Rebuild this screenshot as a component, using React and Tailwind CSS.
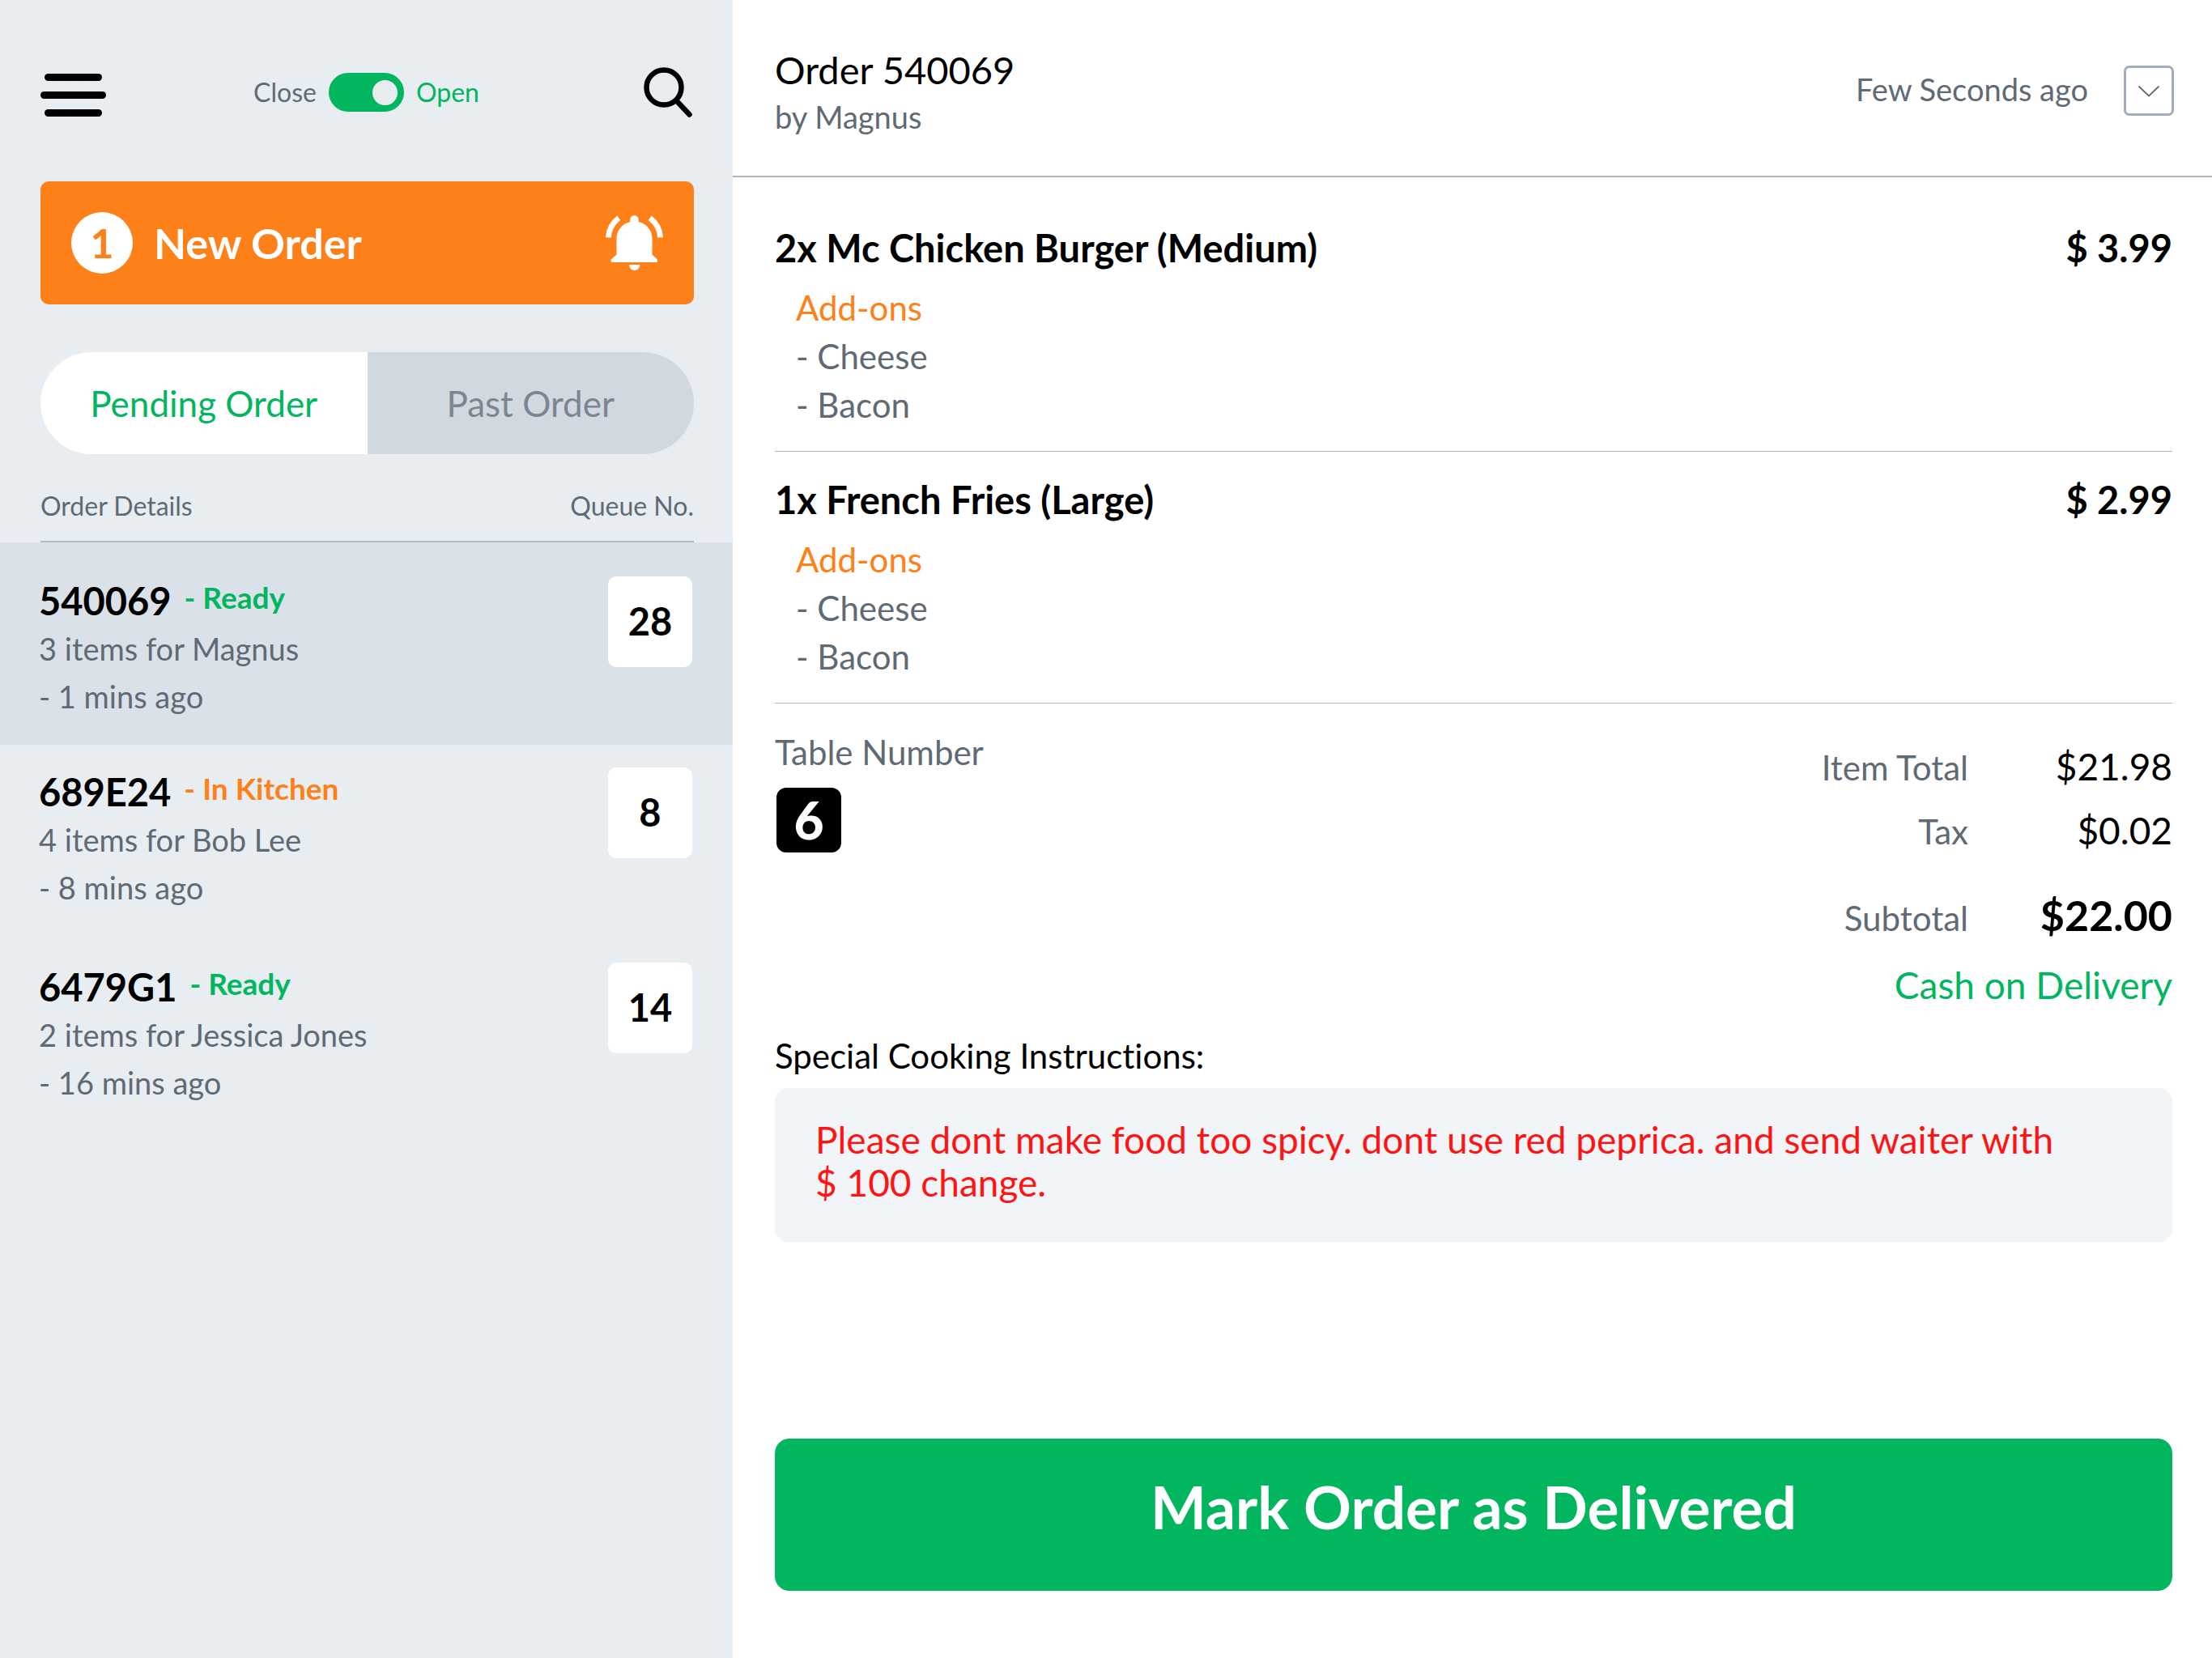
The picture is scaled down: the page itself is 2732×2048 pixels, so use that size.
const queue = [
  { id: "540069", status: "Ready", items: "3 items for Magnus", ago: "- 1 mins ago", no: 28, selected: true },
  { id: "689E24", status: "In Kitchen", items: "4 items for Bob Lee", ago: "- 8 mins ago", no: 8 },
  { id: "6479G1", status: "Ready", items: "2 items for Jessica Jones", ago: "- 16 mins ago", no: 14 },
];

const lines = [
  { name: "2x Mc Chicken Burger (Medium)", price: "$ 3.99", addons: ["Cheese", "Bacon"] },
  { name: "1x French Fries (Large)", price: "$ 2.99", addons: ["Cheese", "Bacon"] },
];

function MenuIcon() {
  return (
    <svg className="h-[62px] w-[81px]" viewBox="0 0 81 62" fill="black" aria-hidden="true">
      <rect x="5" y="8" width="71" height="9" rx="4.5" />
      <rect x="0" y="30" width="81" height="9" rx="4.5" />
      <rect x="5" y="52" width="71" height="9" rx="4.5" />
    </svg>
  );
}

function SearchIcon() {
  return (
    <svg className="h-[62px] w-[60px]" viewBox="0 0 60 62" fill="none" stroke="black" strokeLinecap="round" aria-hidden="true">
      <circle cx="25" cy="25" r="21.5" strokeWidth="6.5" />
      <path d="M41 42 56.5 58.5" strokeWidth="6.5" />
    </svg>
  );
}

function BellIcon() {
  return (
    <svg className="h-[68px] w-[71px]" viewBox="0 0 71 68" aria-hidden="true">
      <path
        fill="white"
        d="M30.3 8V5.2a5.2 5.2 0 0 1 10.4 0V8C50.500 10.200 57.500 18.500 57.500 29V48.500L64 54.500V58H6.700V54.500L13.500 48.500V29C13.500 18.500 20.500 10.200 30.300 8Z"
      />
      <path fill="white" d="M29 61H42.300A6.650 6.900 0 0 1 29 61Z" />
      <g fill="none" stroke="white" strokeWidth="6.8">
        <path d="M3.400 27.300C3.800 17.500 8.500 9.300 16.300 3.200" />
        <path d="M67.600 27.300C67.200 17.500 62.500 9.300 54.700 3.200" />
      </g>
    </svg>
  );
}

function QueueRow({ order }) {
  const tone = order.status === "Ready" ? "text-[#02b55f]" : "text-[#fd8019]";
  const box = order.selected ? "bg-[#dbe1e9] pt-[42px] pb-[30px]" : "pt-7 pb-[35px]";
  return (
    <li>
      <button type="button" className={`flex w-full items-start justify-between pr-[50px] pl-12 text-left ${box}`}>
        <span className="flex flex-col">
          <span className="flex items-center gap-4 leading-[60px] font-bold">
            <span className="text-[47px]">{order.id}</span>
            <span className={`pb-2 text-[37px] leading-[50px] ${tone}`}>- {order.status}</span>
          </span>
          <span className="text-[38px] leading-[58px] text-[#606a75]">{order.items}</span>
          <span className="text-[38px] leading-[60px] text-[#606a75]">{order.ago}</span>
        </span>
        <span className="flex h-[112px] w-[104px] items-center justify-center rounded-[10px] bg-white pb-0.5 text-[47px] font-bold">
          {order.no}
        </span>
      </button>
    </li>
  );
}

function Sidebar() {
  return (
    <aside className="bg-[#e8edf1]">
      <div className="pr-12 pl-[50px]">
        <div className="grid grid-cols-[1fr_auto_1fr] items-center pt-[83px] pr-0.5">
          <button type="button" aria-label="Menu" className="justify-self-start">
            <MenuIcon />
          </button>
          <label className="flex items-center gap-[15px] text-[32px] leading-[48px]">
            <span className="text-[#606a75]">Close</span>
            <input
              type="checkbox"
              role="switch"
              defaultChecked
              aria-label="Restaurant open"
              className="flex h-12 w-[93px] appearance-none items-center rounded-full bg-gray-400 px-2 before:size-[31px] before:rounded-full before:bg-[#e8edf1] checked:justify-end checked:bg-[#02b55f]"
            />
            <span className="text-[#02b55f]">Open</span>
          </label>
          <button type="button" aria-label="Search" className="justify-self-end">
            <SearchIcon />
          </button>
        </div>

        <button type="button" className="mt-[79px] flex h-[152px] w-full items-center rounded-[10px] bg-[#fd8019] pr-[38px] pl-[38px] text-white">
          <span className="flex size-[76px] items-center justify-center rounded-full bg-white text-[50px] font-bold text-[#fd8019]">1</span>
          <span className="ml-[26px] text-[52px] font-bold">New Order</span>
          <span className="ml-auto">
            <BellIcon />
          </span>
        </button>

        <div role="tablist" className="mt-[59px] grid h-[126px] grid-cols-2 overflow-hidden rounded-full text-[44px]">
          <button type="button" role="tab" aria-selected="true" className="bg-white text-[#02b55f]">
            Pending Order
          </button>
          <button type="button" role="tab" aria-selected="false" className="bg-[#d2d8e0] text-[#7b8691]">
            Past Order
          </button>
        </div>

        <div className="mt-10 flex justify-between border-b-2 border-[#b0bac6] pb-[19px] text-[32px] leading-[48px] text-[#606a75]">
          <span>Order Details</span>
          <span>Queue No.</span>
        </div>
      </div>
      <ul>
        {queue.map((order) => (
          <QueueRow key={order.id} order={order} />
        ))}
      </ul>
    </aside>
  );
}

function OrderLine({ line }) {
  return (
    <li className="border-b border-[#a9b6c2] pt-[27px] pb-[27px]">
      <div className="mb-3 flex justify-between text-[47px] leading-[64px] font-bold">
        <h2>{line.name}</h2>
        <span>{line.price}</span>
      </div>
      <div className="pl-[26px] text-[42px] leading-[60px] text-[#606a75]">
        <h3 className="text-[#fd8019]">Add-ons</h3>
        <ul>
          {line.addons.map((name) => (
            <li key={name}>- {name}</li>
          ))}
        </ul>
      </div>
    </li>
  );
}

function TotalRow({ label, value, strong }) {
  return (
    <div className={strong ? "flex items-baseline justify-end pt-[25px]" : "flex items-baseline justify-end"}>
      <dt className="text-[42px] text-[#606a75]">{label}</dt>
      <dd className={strong ? "w-[252px] text-right text-[52px] font-bold" : "w-[252px] text-right text-[46px]"}>{value}</dd>
    </div>
  );
}

export default function App() {
  return (
    <div className="grid min-h-screen grid-cols-[905fr_1827fr] bg-white font-['Lato',sans-serif] text-black [font-variant-ligatures:none]">
      <Sidebar />
      <main className="flex flex-col">
        <header className="flex items-center justify-between border-b-2 border-[#adb8c4] pt-14 pr-[47px] pb-[45px] pl-[52px]">
          <div>
            <h1 className="text-[47px] leading-[60px]">Order 540069</h1>
            <p className="text-[38px] leading-[56px] text-[#606a75]">by Magnus</p>
          </div>
          <div className="flex items-center gap-11 pb-1">
            <span className="pb-1 text-[38px] leading-[56px] text-[#606a75]">Few Seconds ago</span>
            <button
              type="button"
              aria-label="Show order options"
              className="flex size-[62px] items-center justify-center rounded-[7px] border-3 border-[#9fadbc]"
            >
              <svg className="h-[15px] w-7" viewBox="0 0 28 15" fill="none" stroke="#606a75" strokeWidth="1.8" aria-hidden="true">
                <path d="M1.500 1.500 14 13.500 26.500 1.500" />
              </svg>
            </button>
          </div>
        </header>

        <div className="flex grow flex-col pt-7 pr-[49px] pb-[83px] pl-[52px]">
          <ul>
            {lines.map((line) => (
              <OrderLine key={line.name} line={line} />
            ))}
          </ul>

          <section className="flex items-start justify-between">
            <div className="pt-[30px]">
              <h2 className="text-[42px] leading-[60px] text-[#606a75]">Table Number</h2>
              <div className="mt-[14px] ml-0.5 flex size-20 items-center justify-center rounded-xl bg-black text-[64px] font-black text-white">6</div>
            </div>
            <div className="pt-[39px]">
              <dl className="leading-[78px]">
                <TotalRow label="Item Total" value="$21.98" />
                <TotalRow label="Tax" value="$0.02" />
                <TotalRow label="Subtotal" value="$22.00" strong />
              </dl>
              <p className="mt-[14px] text-right text-[46px] leading-[60px] text-[#02b55f]">Cash on Delivery</p>
            </div>
          </section>

          <section className="mt-[27px]">
            <h2 className="text-[42px] leading-[60px]">Special Cooking Instructions:</h2>
            <p className="mt-[10px] rounded-2xl bg-[#f2f5f8] pt-[37px] pr-[110px] pb-[47px] pl-[50px] text-[46px] leading-[53px] text-[#ff1414]">
              Please dont make food too spicy. dont use red peprica. and send waiter with $&nbsp;100&nbsp;change.
            </p>
          </section>

          <button type="button" className="mt-auto flex h-[188px] items-center justify-center rounded-[18px] bg-[#02b55f] pb-[18px] text-[73px] font-bold text-white">
            Mark Order as Delivered
          </button>
        </div>
      </main>
    </div>
  );
}
